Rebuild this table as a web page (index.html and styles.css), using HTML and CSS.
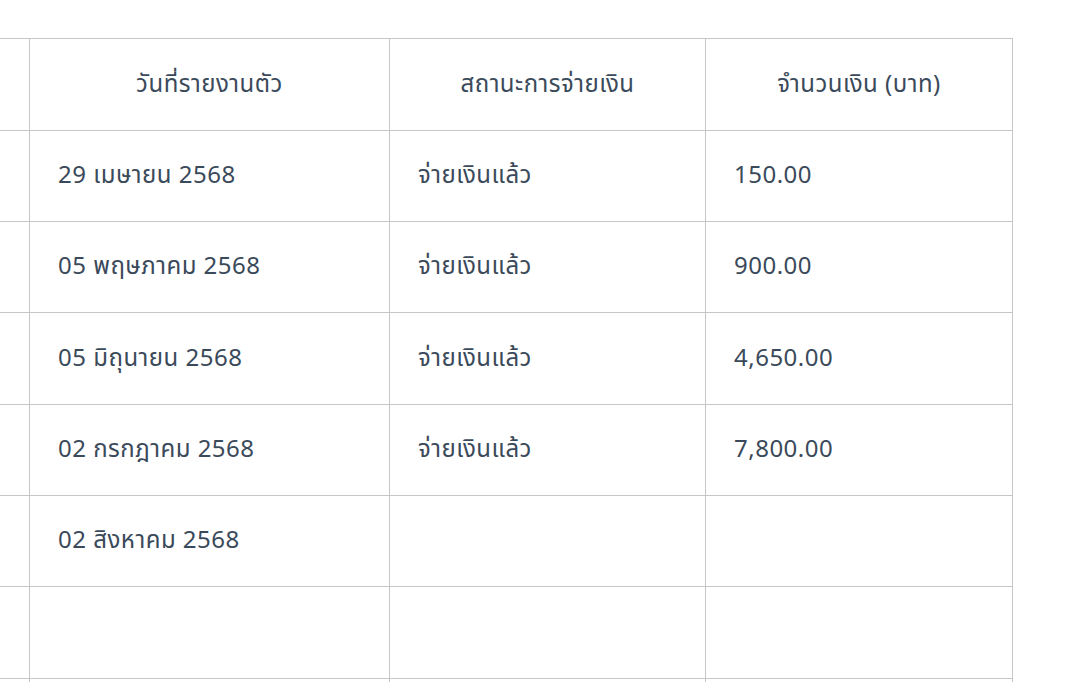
FILE: index.html
```html
<!DOCTYPE html>
<html lang="th">
<head>
<meta charset="utf-8">
<link rel="stylesheet" href="styles.css">
</head>
<body>
<div class="viewport">
  <table class="report">
    <thead>
      <tr>
        <th class="col-hidden"></th>
        <th class="col-date">วันที่รายงานตัว</th>
        <th class="col-status">สถานะการจ่ายเงิน</th>
        <th class="col-amount">จำนวนเงิน (บาท)</th>
      </tr>
    </thead>
    <tbody>
      <tr><td class="col-hidden"></td><td>29 เมษายน 2568</td><td>จ่ายเงินแล้ว</td><td>150.00</td></tr>
      <tr><td class="col-hidden"></td><td>05 พฤษภาคม 2568</td><td>จ่ายเงินแล้ว</td><td>900.00</td></tr>
      <tr class="tall"><td class="col-hidden"></td><td>05 มิถุนายน 2568</td><td>จ่ายเงินแล้ว</td><td>4,650.00</td></tr>
      <tr><td class="col-hidden"></td><td>02 กรกฎาคม 2568</td><td>จ่ายเงินแล้ว</td><td>7,800.00</td></tr>
      <tr><td class="col-hidden"></td><td>02 สิงหาคม 2568</td><td></td><td></td></tr>
      <tr class="tall"><td class="col-hidden"></td><td></td><td></td><td></td></tr>
      <tr><td class="col-hidden"></td><td></td><td></td><td></td></tr>
    </tbody>
  </table>
</div>
</body>
</html>
```

FILE: styles.css
```css
html, body {
  margin: 0;
  padding: 0;
  background: #ffffff;
}

.viewport {
  width: 1080px;
  height: 682px;
  overflow: hidden;
  padding-top: 38px;
  box-sizing: border-box;
}

.report {
  border-collapse: collapse;
  table-layout: fixed;
  margin-left: -200px;
  font-family: "Noto Sans Thai", "Noto Sans", "Open Sans", sans-serif;
  font-size: 24px;
  letter-spacing: 0.5px;
  color: #3b4a5a;
}

.report th,
.report td {
  border: 1px solid #c6c6c6;
  padding: 0 0 0 28px;
  text-align: left;
  vertical-align: middle;
  font-weight: 400;
  white-space: nowrap;
}

.report th {
  height: 91px;
  padding: 0;
  text-align: center;
}

.report td {
  height: 90px;
}

.report tr.tall td {
  height: 91px;
}

.col-hidden { width: 200px; }
.col-date { width: 359px; }
.col-status { width: 315px; }
.col-amount { width: 306px; }
```
